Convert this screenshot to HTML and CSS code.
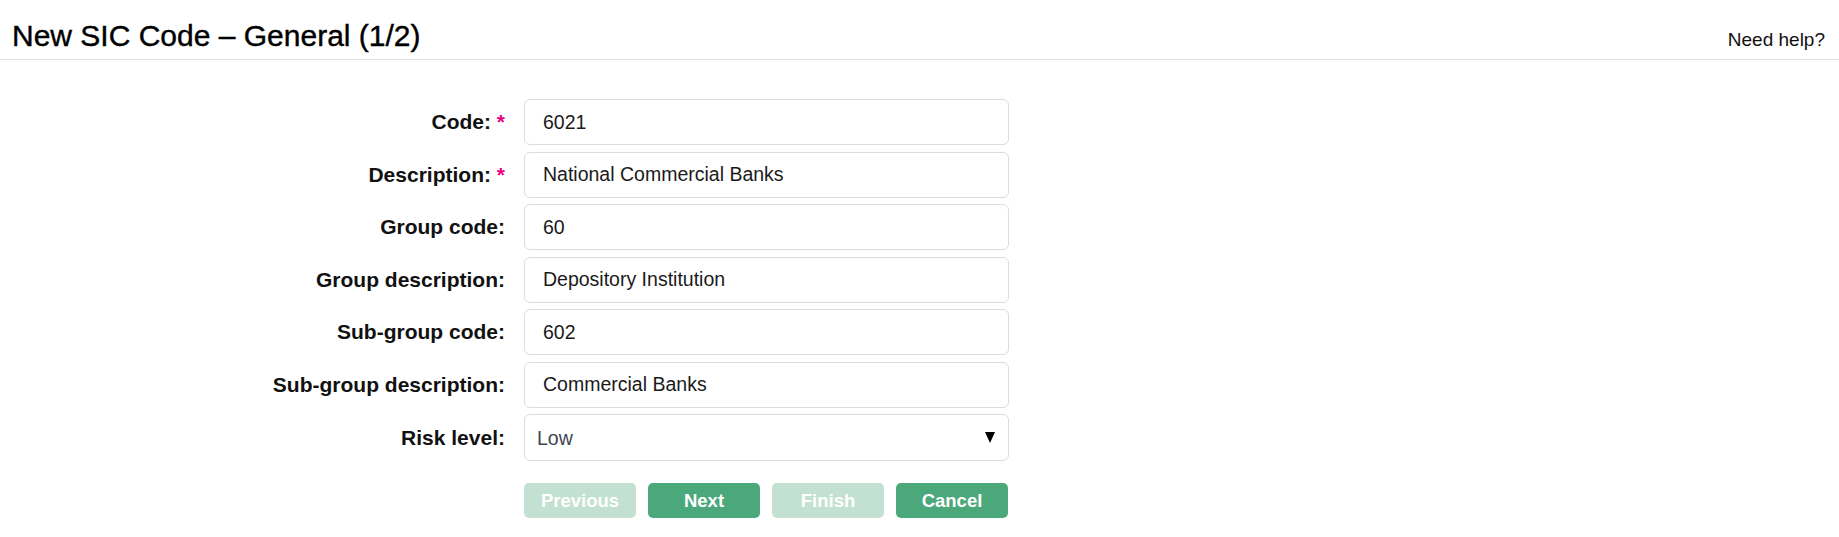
FILE: index.html
```html
<!DOCTYPE html>
<html lang="en">
<head>
<meta charset="utf-8">
<title>New SIC Code – General (1/2)</title>
<link rel="stylesheet" href="styles.css">
</head>
<body>
<header class="page-header">
  <h1 class="page-title">New SIC Code – General (1/2)</h1>
  <a class="help-link" href="#">Need help?</a>
</header>
<form class="wizard-form">
  <label class="field-label" for="code">Code: <span class="req">*</span></label>
  <input class="field-input" id="code" type="text" value="6021">

  <label class="field-label" for="desc">Description: <span class="req">*</span></label>
  <input class="field-input" id="desc" type="text" value="National Commercial Banks">

  <label class="field-label" for="gcode">Group code:</label>
  <input class="field-input" id="gcode" type="text" value="60">

  <label class="field-label" for="gdesc">Group description:</label>
  <input class="field-input" id="gdesc" type="text" value="Depository Institution">

  <label class="field-label" for="sgcode">Sub-group code:</label>
  <input class="field-input" id="sgcode" type="text" value="602">

  <label class="field-label" for="sgdesc">Sub-group description:</label>
  <input class="field-input" id="sgdesc" type="text" value="Commercial Banks">

  <label class="field-label" for="risk">Risk level:</label>
  <div class="select-wrap">
    <select class="field-select" id="risk">
      <option selected>Low</option>
      <option>Medium</option>
      <option>High</option>
    </select>
  </div>

  <div class="button-row">
    <button class="btn btn-disabled" type="button" disabled>Previous</button>
    <button class="btn" type="button">Next</button>
    <button class="btn btn-disabled" type="button" disabled>Finish</button>
    <button class="btn" type="button">Cancel</button>
  </div>
</form>
</body>
</html>
```

FILE: styles.css
```css
* { box-sizing: border-box; }

body {
  margin: 0;
  background: #ffffff;
  font-family: "Liberation Sans", Arial, sans-serif;
  color: #111111;
}

.page-header {
  display: flex;
  justify-content: space-between;
  align-items: baseline;
  padding: 19px 14px 6px 12px;
  border-bottom: 1px solid #dddddd;
}

.page-title {
  margin: 0;
  font-size: 30px;
  line-height: 34px;
  font-weight: 400;
  color: #000000;
  -webkit-text-stroke: 0.4px #000000;
}

.help-link {
  font-size: 19px;
  color: #111111;
  text-decoration: none;
}

.wizard-form {
  display: grid;
  grid-template-columns: 505px 485px;
  column-gap: 19px;
  row-gap: 6.5px;
  margin-top: 39px;
  align-items: center;
}

.field-label {
  text-align: right;
  font-size: 21px;
  font-weight: 700;
  color: #111111;
  white-space: nowrap;
}

.req {
  color: #e6007e;
}

.field-input,
.field-select {
  width: 100%;
  height: 46px;
  border: 1px solid #dcdcdc;
  border-radius: 6px;
  background: #ffffff;
  font-family: "Liberation Sans", Arial, sans-serif;
  font-size: 19.5px;
  color: #1a1a1a;
  padding: 0 18px;
  outline: none;
}

.select-wrap {
  position: relative;
}

.field-select {
  height: 47px;
  appearance: none;
  -webkit-appearance: none;
  padding: 0 12px;
  color: #3d4551;
}

.select-wrap::after {
  content: "";
  position: absolute;
  right: 14px;
  top: 18px;
  width: 0;
  height: 0;
  border-left: 5.5px solid transparent;
  border-right: 5.5px solid transparent;
  border-top: 11px solid #000000;
  pointer-events: none;
}

.button-row {
  grid-column: 2;
  display: flex;
  gap: 12px;
  margin-top: 15.5px;
}

.btn {
  width: 112px;
  height: 35px;
  border: none;
  border-radius: 5px;
  background: #4ba87a;
  color: #ffffff;
  font-family: "Liberation Sans", Arial, sans-serif;
  font-size: 18.5px;
  font-weight: 700;
  padding: 0;
  cursor: pointer;
}

.btn-disabled {
  background: #c3e1d2;
  cursor: default;
}
```
